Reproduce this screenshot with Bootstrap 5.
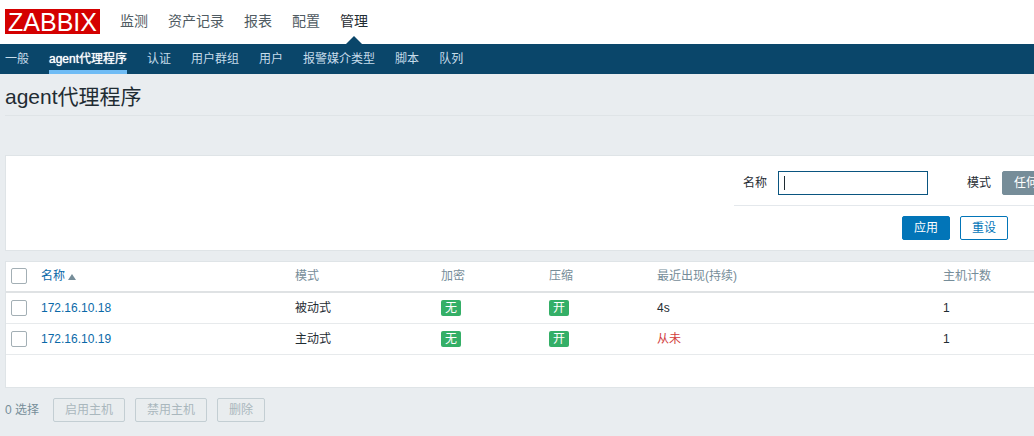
<!DOCTYPE html>
<html lang="zh-CN">
<head>
<meta charset="utf-8">
<meta name="viewport" content="width=device-width, initial-scale=1">
<title>agent代理程序</title>
<link href="https://cdn.jsdelivr.net/npm/bootstrap@5.3.0/dist/css/bootstrap.min.css" rel="stylesheet">
<style>
body{background:#e9edf0;color:#1f2c33;font:12px/16px "Liberation Sans","Noto Sans CJK SC",sans-serif;overflow-x:hidden}
a{color:#0a69a8;text-decoration:none}
.top-bar{height:44px;padding-left:5px;gap:20px}
.logo{background:#d40000;color:#fff;width:95px;height:25px;font-size:25px;line-height:26px;text-align:center;margin-bottom:2px}
.main-menu{gap:20px;font-size:14px;line-height:20px}
.main-menu a{display:block;position:relative;color:#4f5b62;padding:11px 0 13px}
.main-menu a.active{color:#1f2c33}
.main-menu a.active::after{content:"";position:absolute;left:50%;bottom:0;margin-left:-8px;border:8px solid transparent;border-top:0;border-bottom-color:#0a466a}
.sub-menu{background:#0a466a;padding-left:5px;gap:20px;height:30px}
.sub-menu a{display:block;color:#c6dcea;padding:7px 0 3px;border-bottom:4px solid transparent}
.sub-menu a.active{color:#fff;border-color:#6fbcf5;text-shadow:0 0 1px #fff}
main{padding-left:5px}
h1{font-size:21px;line-height:26px;height:42px;padding-top:10px;border-bottom:1px solid #dfe4e7;margin-bottom:39px}
.panel{background:#fff;border:1px solid #dfe4e7;border-right:0;margin-bottom:10px}
.filter-form{width:300px}
.filter-fields{padding:15px 0 10px 9px;border-bottom:1px solid #e4e8ec;overflow:hidden}
.name-field{width:150px;height:24px;border:1px solid #0a5580;border-radius:0;padding:0 5px;outline:0;margin:0 39px 0 11px;background:linear-gradient(#1f2c33,#1f2c33) 5px center/1px 14px no-repeat #fff;caret-color:transparent}
.act{height:24px;font-size:12px;line-height:16px;padding:0 11px;border-radius:2px;white-space:nowrap;flex:none}
.act-main{background:#0275b8;border-color:#0275b8;color:#fff}
.act-alt{background:#fff;border-color:#0275b8;color:#0275b8}
.act-mode{background:#768d99;border-color:#768d99;color:#fff;margin-left:11px}
.act:disabled{background:#e9edef;border-color:#c3ced3;color:#a9b7bd;opacity:1}
.filter-actions{gap:10px;padding:10px 26px 10px 0}
.proxies{table-layout:fixed;width:100%;margin-bottom:32px}
.proxies th,.proxies td{padding:0;height:31px;border-bottom:1px solid #e7eaec;white-space:nowrap;vertical-align:middle}
.proxies th{height:30px;font-weight:400;color:#768d99;border-bottom:2px solid #dfe2e4;padding-bottom:2px}
.tick{appearance:none;display:block;width:16px;height:16px;border:1px solid #a3afb5;border-radius:2px;background:#fff;margin:0 0 0 5px}
.sort-up{display:inline-block;border:4px solid transparent;border-top:0;border-bottom:6px solid #768d99;margin-left:3px}
.flag{display:inline-block;background:#34af67;color:#fff;border-radius:2px;width:20px;height:16px;line-height:16px;text-align:center;vertical-align:middle}
.late{color:#d23d3d}
.c-tick{width:35px}.c-name{width:254px}.c-mode{width:146px}.c-flag{width:108px}.c-seen{width:286px}
.footer-bar{gap:10px;padding-bottom:14px;color:#768d99}
.footer-bar span{margin-right:4px}
</style>
</head>
<body>
<header>
<div class="top-bar d-flex align-items-center bg-white">
<div class="logo">ZABBIX</div>
<nav class="main-menu d-flex">
<a href="#">监测</a><a href="#">资产记录</a><a href="#">报表</a><a href="#">配置</a><a href="#" class="active">管理</a>
</nav>
</div>
<nav class="sub-menu d-flex">
<a href="#">一般</a><a href="#" class="active">agent代理程序</a><a href="#">认证</a><a href="#">用户群组</a><a href="#">用户</a><a href="#">报警媒介类型</a><a href="#">脚本</a><a href="#">队列</a>
</nav>
</header>
<main>
<h1 class="fw-normal">agent代理程序</h1>
<section class="panel">
<form class="filter-form ms-auto">
<div class="filter-fields d-flex align-items-center text-nowrap">
<label for="name">名称</label>
<input id="name" type="text" class="name-field flex-shrink-0">
<span>模式</span>
<button type="button" class="btn act act-mode">任何</button>
</div>
<div class="filter-actions d-flex justify-content-end">
<button type="button" class="btn act act-main">应用</button>
<button type="button" class="btn act act-alt">重设</button>
</div>
</form>
</section>
<section class="panel">
<table class="proxies">
<colgroup><col class="c-tick"><col class="c-name"><col class="c-mode"><col class="c-flag"><col class="c-flag"><col class="c-seen"><col></colgroup>
<thead><tr><th><input type="checkbox" class="tick" aria-label="全选"></th><th><a href="#">名称<i class="sort-up"></i></a></th><th>模式</th><th>加密</th><th>压缩</th><th>最近出现(持续)</th><th>主机计数</th></tr></thead>
<tbody>
<tr><td><input type="checkbox" class="tick" aria-label="172.16.10.18"></td><td><a href="#">172.16.10.18</a></td><td>被动式</td><td><span class="flag">无</span></td><td><span class="flag">开</span></td><td>4s</td><td>1</td></tr>
<tr><td><input type="checkbox" class="tick" aria-label="172.16.10.19"></td><td><a href="#">172.16.10.19</a></td><td>主动式</td><td><span class="flag">无</span></td><td><span class="flag">开</span></td><td class="late">从未</td><td>1</td></tr>
</tbody>
</table>
</section>
<div class="footer-bar d-flex align-items-center">
<span>0 选择</span>
<button type="button" class="btn act" disabled>启用主机</button>
<button type="button" class="btn act" disabled>禁用主机</button>
<button type="button" class="btn act" disabled>删除</button>
</div>
</main>
<script src="https://cdn.jsdelivr.net/npm/bootstrap@5.3.0/dist/js/bootstrap.bundle.min.js"></script>
</body>
</html>
